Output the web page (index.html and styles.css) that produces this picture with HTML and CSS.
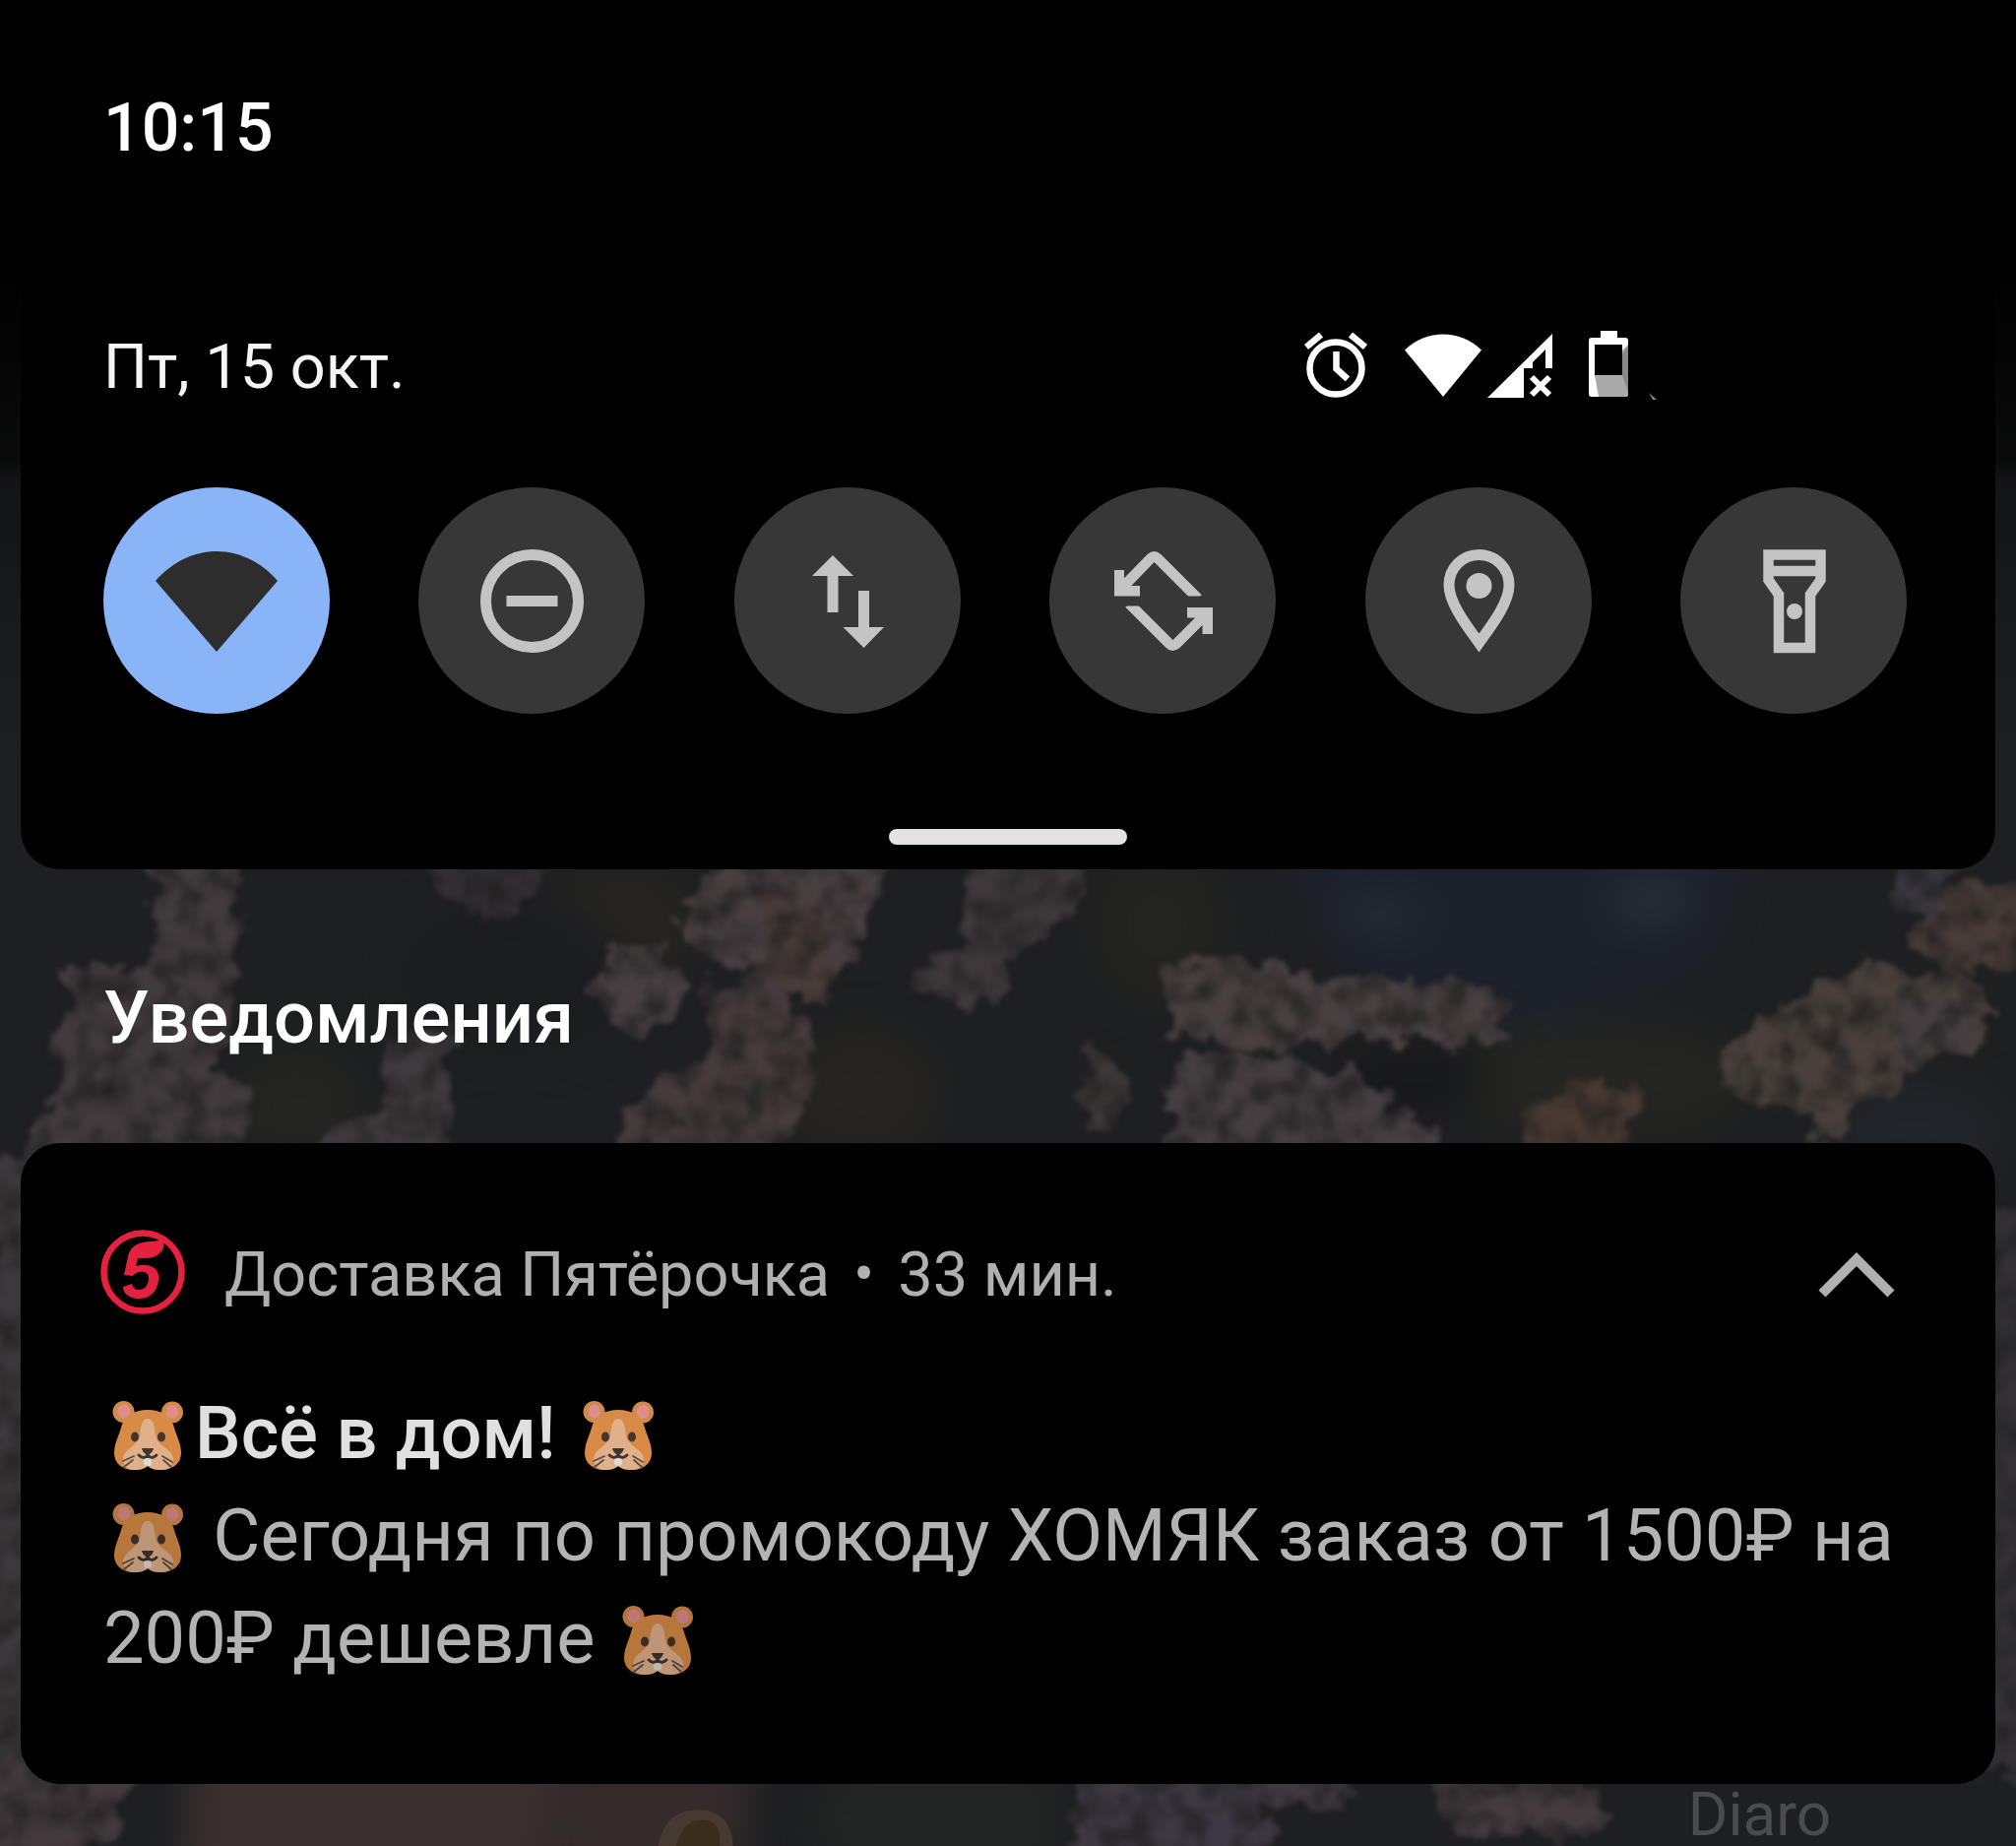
FILE: index.html
```html
<!DOCTYPE html>
<html lang="ru">
<head>
  <meta charset="UTF-8" />
  <meta name="viewport" content="width=device-width, initial-scale=1.0"/>
  <title>Уведомления</title>
  <link rel="stylesheet" href="styles.css">
</head>
<body>

  <!-- Wallpaper -->
  <svg class="wallpaper" viewBox="0 0 1568 1436" preserveAspectRatio="xMidYMid slice" aria-hidden="true">
    <defs>
      <filter id="petals" x="-10%" y="-10%" width="120%" height="120%" color-interpolation-filters="sRGB">
        <feTurbulence type="fractalNoise" baseFrequency="0.05" numOctaves="4" seed="4" result="noise"/>
        <feDisplacementMap in="SourceGraphic" in2="noise" scale="34" xChannelSelector="R" yChannelSelector="G" result="shape"/>
        <feTurbulence type="fractalNoise" baseFrequency="0.05" numOctaves="4" seed="9"/>
        <feColorMatrix type="matrix" values="0 0 0 0 0.12  0 0 0 0 0.12  0 0 0 0 0.12  1.8 0 0 0 -0.65"/>
        <feComposite in2="shape" operator="in" result="grain"/>
        <feMerge>
          <feMergeNode in="shape"/>
          <feMergeNode in="grain"/>
        </feMerge>
        <feGaussianBlur stdDeviation="2"/>
      </filter>
      <filter id="soft" x="-30%" y="-30%" width="160%" height="160%" color-interpolation-filters="sRGB">
        <feGaussianBlur stdDeviation="16"/>
      </filter>
      <linearGradient id="shade" x1="0" y1="0" x2="0" y2="1">
        <stop offset="0.14" stop-color="#000"/>
        <stop offset="0.22" stop-color="#000" stop-opacity="0.75"/>
        <stop offset="0.25" stop-color="#000" stop-opacity="0.7"/>
        <stop offset="0.26" stop-color="#000" stop-opacity="0.35"/>
        <stop offset="0.42" stop-color="#000" stop-opacity="0"/>
      </linearGradient>
    </defs>
    <rect width="1568" height="1436" fill="#1e1f21"/>
    <g filter="url(#soft)">
      <path fill="#1d212c" d="M1000 650H1360L1330 750 1200 800 1060 780Z"/>
      <ellipse cx="1070" cy="712" rx="40" ry="14" fill="#252b35"/>
      <ellipse cx="1285" cy="700" rx="36" ry="22" fill="#262b36"/>
      <ellipse cx="1240" cy="840" rx="120" ry="46" fill="#252621"/>
      <ellipse cx="670" cy="850" rx="60" ry="50" fill="#262521"/>
      <ellipse cx="900" cy="720" rx="50" ry="60" fill="#242421"/>
      <ellipse cx="230" cy="860" rx="50" ry="40" fill="#252622"/>
      <ellipse cx="480" cy="720" rx="60" ry="50" fill="#262522"/>
      <ellipse cx="1100" cy="840" rx="60" ry="26" fill="#17181a"/>
      <ellipse cx="400" cy="760" rx="90" ry="60" fill="#1c1d20"/>
      <ellipse cx="1490" cy="880" rx="70" ry="40" fill="#22252a"/>
      <rect x="640" y="1380" width="180" height="70" fill="#242725"/>
    </g>
    <g filter="url(#petals)">
      <path fill="#423b3d" d="M112 660H190L182 720 186 770 168 830 196 850 178 900H18L44 850 38 808 62 780 50 752 110 760 124 716Z"/>
      <path fill="#332e32" d="M316 660H432L410 710 362 716Z"/>
      <path fill="#3f3a3d" d="M298 810 352 800 350 860 344 900H236L262 872 300 862Z"/>
      <path fill="#483f41" d="M532 700 570 660H700L660 750 628 760 550 744 530 724Z"/>
      <path fill="#493d39" d="M586 690 626 704 654 750 642 784 604 770Z"/>
      <circle cx="498" cy="768" r="34" fill="#484042"/>
      <path fill="#463b3d" d="M548 770 600 754 632 812 626 870 600 900H484L496 846 548 824Z"/>
      <path fill="#3e383b" d="M752 660H852L834 716 800 722 782 776 752 780 710 772 712 750 752 734Z"/>
      <path fill="#494041" d="M906 750 956 742 1010 758 1100 762 1164 770 1172 794 1150 812 1050 806 1004 820 912 802Z"/>
      <path fill="#463f42" d="M910 820 956 818 1010 826 1056 836 1082 862 1124 880 1120 910H906Z"/>
      <path fill="#3c3837" d="M846 814 880 836 868 884 838 870Z"/>
      <path fill="#483a32" d="M1190 858 1230 836 1280 854 1262 906H1186Z"/>
      <path fill="#4a413c" d="M1336 820 1372 796 1400 770 1452 748 1540 764 1546 806 1500 830 1448 856 1424 890 1398 864 1344 848Z"/>
      <path fill="#463f41" d="M1470 780 1536 776 1526 812 1478 826Z"/>
      <path fill="#493d39" d="M1498 712 1530 690H1590V750L1520 760 1490 742Z"/>
      <path fill="#38363d" d="M1464 660H1524L1512 710 1476 704Z"/>
      <path fill="#3c383b" d="M-40 900H34V1440H-40Z"/>
      <path fill="#343236" d="M1534 940H1610V1380H1534Z"/>
      <path fill="#42393c" d="M-20 1370H104L90 1420 60 1460H-20Z"/>
      <path fill="#3e3842" d="M842 1366H990L984 1460H828Z"/>
      <path fill="#413a41" d="M960 1366H1056L1040 1404 990 1410Z"/>
      <path fill="#453c3f" d="M1098 1366H1220L1256 1416 1240 1432 1130 1426Z"/>
    </g>
    <g filter="url(#soft)">
      <path fill="#3b3130" d="M150 1340H440L420 1500H140Z"/>
      <path fill="#342b2b" d="M440 1350H590L570 1500H430Z"/>
    </g>
    <path fill="#463a30" d="M512 1436C516 1412 532 1406 548 1408 562 1410 570 1420 570 1436Z"/>
    <path fill="#3b2d1d" d="M526 1436C530 1418 540 1414 552 1416 560 1420 560 1428 560 1436Z"/>
    <rect width="1568" height="1436" fill="url(#shade)"/>
  </svg>

  <!-- Hamster, reused in the notification text -->
  <svg class="sprite" aria-hidden="true">
    <symbol id="hamster" viewBox="0 0 72 72">
      <circle cx="11.500" cy="12" r="11" fill="#d28a4b"/>
      <circle cx="61" cy="12.500" r="11" fill="#d28a4b"/>
      <ellipse cx="12" cy="11.500" rx="6.500" ry="7" fill="#df8d8a"/>
      <ellipse cx="61" cy="12" rx="6.500" ry="7" fill="#df8d8a"/>
      <path fill="#d88b47" d="M36 10C50 10 60 16 63 28 65 36 70 44 70 54 70 64 62 71 50 71 44 71 40 70 36 67 32 70 28 71 22 71 10 71 2 64 2 54 2 44 7 36 9 28 12 16 22 10 36 10Z"/>
      <path fill="#e0b08c" d="M36 19C42 19 43 27 44 37 45 46 60 49 62 59 62 67 57 71 50 71 43 71 40 70 36 67 32 70 29 71 22 71 15 71 11 67 11 59 13 49 26 46 28 37 29 27 30 19 36 19Z"/>
      <ellipse cx="23" cy="37.500" rx="4" ry="5" fill="#403530"/>
      <ellipse cx="50" cy="37.500" rx="4" ry="5" fill="#403530"/>
      <path fill="#dedad5" d="M32 58H40V65Q36 69 32 65Z"/>
      <path fill="#403530" d="M30 49H42Q41 54 36 56 31 54 30 49Z"/>
      <path fill="none" stroke="#403530" stroke-width="3" stroke-linecap="round" d="M27 56Q32 61 36 56 40 61 45 56"/>
      <path fill="none" stroke="#5c4c42" stroke-width="1.800" stroke-linecap="round" d="M22 57 11 62M21 61 12 68M51 57 61 63M52 61 60 68"/>
    </symbol>
  </svg>

  <div class="panel">
    <div class="clock">10:15</div>

    <div class="status-row">
      <div class="date">Пт, 15 окт.</div>
      <div class="status-icons">
        <svg class="alarm" viewBox="0 0 66 68">
          <circle cx="32" cy="38" r="26.500" fill="none" stroke="#fff" stroke-width="6.500"/>
          <path fill="none" stroke="#fff" stroke-width="6.500" d="M2 16.500 17 4M62 16.500 47 4M32.500 21V38.500L44 49"/>
        </svg>
        <svg class="wifi" viewBox="0 0 78 68">
          <path fill="#fff" d="M0 19.500C22-2 56-2 78 19.500L39 67Z"/>
        </svg>
        <svg class="signal" viewBox="0 0 66 68">
          <path fill="#fff" fill-rule="evenodd" d="M0 68 66 3V38H59V19L46 32V38H37V68Z"/>
          <path stroke="#fff" stroke-width="6" d="M45 47 63 65M63 47 45 65"/>
        </svg>
        <svg class="battery" viewBox="0 0 72 72">
          <path fill="#fff" d="M12 0H29V7H37Q40 7 40 10V64Q40 67 37 67H3Q0 67 0 64V10Q0 7 3 7H12Z"/>
          <path fill="#aaa" d="M34 20 40 14V64Q40 67 37 67H10L6 45H34Z"/>
          <path fill="#888" d="M34 24 40 16V62L34 45Z"/>
          <path fill="#000" d="M6 14H34V45H6Z"/>
          <path fill="#888" d="M61 63 69 70H65Z"/>
        </svg>
      </div>
    </div>

    <div class="tiles">
      <button class="tile active" aria-label="Wi-Fi">
        <svg viewBox="0 0 126 126">
          <path d="M1 43C36 3 90 3 125 43L63 115Z" fill="#2d2d2d"/>
        </svg>
      </button>
      <button class="tile" aria-label="Не беспокоить">
        <svg viewBox="0 0 126 126">
          <circle cx="63.500" cy="63.500" r="47" fill="none" stroke="#c4c4c4" stroke-width="11"/>
          <path d="M37.500 58H89.500V69H37.500Z" fill="#c4c4c4"/>
        </svg>
      </button>
      <button class="tile" aria-label="Передача данных">
        <svg viewBox="0 0 126 126">
          <path d="M48 17 69 38H53.500V75H42.500V38H27ZM79.500 111 58.500 90H74V53H85V90H100Z" fill="#c4c4c4"/>
        </svg>
      </button>
      <button class="tile" aria-label="Автоповорот">
        <svg viewBox="0 0 126 126">
          <path d="M19 53 51 20Q54.500 17 58 20L99 61" fill="none" stroke="#c4c4c4" stroke-width="10.500"/>
          <path d="M29 66 70 107Q73 110 77 107L107 77" fill="none" stroke="#c4c4c4" stroke-width="10.500"/>
          <!-- trims the free ends flat -->
          <path d="M84 58.500H112V66H84ZM18 62H48V68.500H18Z" fill="#373737"/>
          <path d="M14 32H24V48H40V58.500H14ZM88 70H114V97H103.500V80.500H88Z" fill="#c4c4c4"/>
        </svg>
      </button>
      <button class="tile" aria-label="Местоположение">
        <svg viewBox="0 0 126 126">
          <path d="M63.500 16.500C46.500 16.500 33 30 33 47 33 66 52 90 63.500 106 75 90 94 66 94 47 94 30 80.500 16.500 63.500 16.500Z" fill="none" stroke="#c4c4c4" stroke-width="11" stroke-miterlimit="10"/>
          <circle cx="63.500" cy="48" r="13" fill="#c4c4c4"/>
        </svg>
      </button>
      <button class="tile" aria-label="Фонарик">
        <svg viewBox="0 0 126 126">
          <path d="M37.500 16.500H90.500V42L80 57V111H48V57L37.500 42ZM37 33H90" fill="none" stroke="#c4c4c4" stroke-width="10.500"/>
          <circle cx="64" cy="74" r="8" fill="#c4c4c4"/>
        </svg>
      </button>
    </div>

    <div class="handle"></div>
  </div>

  <h2 class="section-title">Уведомления</h2>

  <div class="card">
    <div class="card-header">
      <svg class="app-icon" viewBox="0 0 86 86" aria-hidden="true">
        <circle cx="43" cy="43" r="39.500" fill="none" stroke="#e4223f" stroke-width="6.500"/>
        <path fill="#e4223f" d="M64 10C67 21 58 29 46 29H38L36 37C50 33 61 39 59 52 57 65 48 71 37 70 28 69 23 64 23 58L32 55C33 59 35 61 39 61 45 61 48 57 49 51 50 44 45 42 39 43 36 44 34 45 33 47L24 46 28 27C31 13 45 12 54 12Z"/>
      </svg>
      <div class="app-name">Доставка Пятёрочка<span class="dot">•</span>33 мин.</div>
      <button class="collapse" aria-label="Свернуть">
        <svg viewBox="0 0 78 48">
          <path fill="none" stroke="#b0b0b0" stroke-width="10" d="M4 43 39 8 74 43"/>
        </svg>
      </button>
    </div>
    <div class="card-title"><svg class="emoji" role="img" aria-label="хомяк"><use href="#hamster"/></svg>Всё в дом! <svg class="emoji" role="img" aria-label="хомяк"><use href="#hamster"/></svg></div>
    <div class="card-text"><svg class="emoji" role="img" aria-label="хомяк"><use href="#hamster"/></svg> Сегодня по промокоду ХОМЯК заказ от 1500₽ на 200₽ дешевле <svg class="emoji" role="img" aria-label="хомяк"><use href="#hamster"/></svg></div>
  </div>

  <div class="app-label">Diaro</div>

</body>
</html>
```
FILE: styles.css
```css
* {
  box-sizing: border-box;
}

body {
  font-family: Roboto, "Noto Sans", sans-serif;
  margin: 0;
  min-height: 100vh;
  background-color: #1e1f22;
  color: #fff;
  position: relative;
}

.wallpaper {
  position: absolute;
  top: 0;
  left: 0;
  width: 100%;
  height: 100%;
  z-index: -1;
}

.sprite {
  position: absolute;
  width: 0;
  height: 0;
}

button {
  border: none;
  padding: 0;
  background: none;
  cursor: pointer;
}

svg {
  display: block;
}

/* Quick settings */
.panel {
  margin: 0 21px;
  padding: 88px 84px 25px;
  background-color: #000;
  border-radius: 0 0 40px 40px;
}

.clock {
  font-size: 68px;
  line-height: 84px;
  font-weight: 500;
}

.status-row {
  display: flex;
  justify-content: space-between;
  align-items: flex-start;
  margin-top: 164px;
  padding-right: 257px;
}

.date {
  font-size: 63px;
  line-height: 74px;
  color: #f5f5f5;
}

.status-icons {
  display: flex;
}

.status-icons svg {
  height: 68px;
}

.status-icons .alarm {
  width: 66px;
  margin-right: 36px;
}

.status-icons .wifi {
  width: 78px;
  margin-right: 6px;
}

.status-icons .signal {
  width: 66px;
  margin-right: 37px;
}

.status-icons .battery {
  width: 72px;
  height: 72px;
}

.tiles {
  display: flex;
  justify-content: space-between;
  margin-top: 85px;
  padding-right: 6px;
}

.tile {
  width: 230px;
  height: 230px;
  border-radius: 50%;
  background-color: #373737;
  display: flex;
  align-items: center;
  justify-content: center;
}

.tile.active {
  background-color: #8ab4f8;
}

.tile svg {
  width: 126px;
  height: 126px;
}

.handle {
  width: 242px;
  height: 16px;
  margin: 117px auto 0;
  border-radius: 8px;
  background-color: #e6e2e2;
}

/* Notifications */
.section-title {
  margin: 0;
  padding: 109px 105px 85px;
  font-size: 74px;
  line-height: 84px;
  font-weight: 500;
}

.card {
  margin: 0 21px;
  padding: 88px 84px 96px;
  background-color: #000;
  border-radius: 40px;
}

.card-header {
  display: flex;
  align-items: center;
  margin: 0 0 63px -3px;
}

.app-icon {
  width: 86px;
  height: 86px;
  align-self: flex-start;
}

.app-name {
  flex: 1;
  margin-left: 40px;
  font-size: 63px;
  line-height: 92px;
  color: #b0b0b0;
}

.dot {
  margin: 0 24px;
}

.collapse {
  margin-right: 18px;
}

.collapse svg {
  width: 78px;
  height: 48px;
}

.card-title,
.card-text {
  font-size: 74px;
  line-height: 104px;
}

.card-title {
  font-weight: 500;
  color: #e0e0e0;
}

.card-text {
  color: #b3b3b3;
}

.emoji {
  display: inline-block;
  width: 74px;
  height: 72px;
  margin: 0 11px 0 8px;
  vertical-align: -13px;
}

.card-text .emoji {
  opacity: 0.85;
}

.app-label {
  padding-right: 188px;
  font-size: 62px;
  line-height: 62px;
  text-align: right;
  color: #4b4b4e;
}
```
